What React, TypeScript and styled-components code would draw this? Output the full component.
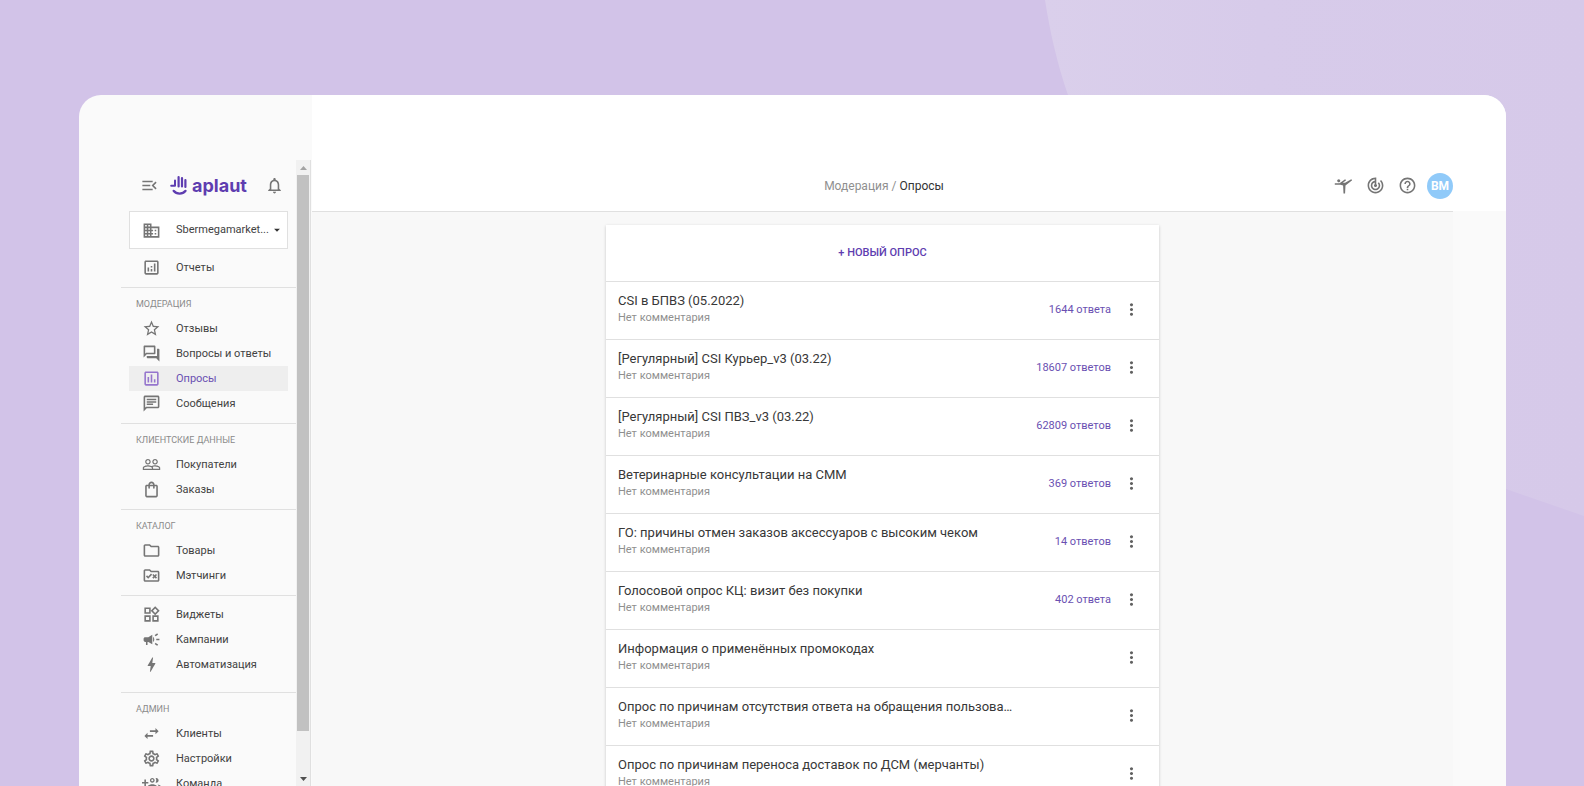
import React from "react";
import styled, { createGlobalStyle, css } from "styled-components";
import {
  MdMenuOpen,
  MdNotificationsNone,
  MdBusiness,
  MdArrowDropDown,
  MdOutlineAnalytics,
  MdStarOutline,
  MdOutlineQuestionAnswer,
  MdOutlinePoll,
  MdOutlineChat,
  MdPeopleOutline,
  MdOutlineShoppingBag,
  MdOutlineFolder,
  MdOutlineRuleFolder,
  MdOutlineWidgets,
  MdCampaign,
  MdBolt,
  MdSwapHoriz,
  MdOutlineSettings,
  MdSportsGymnastics,
  MdTrackChanges,
  MdHelpOutline,
  MdMoreVert,
} from "react-icons/md";

const color = {
  accent: "#5e3db0",
  accentSoft: "#9575cd",
  link: "#6a50b2",
  text: "#424242",
  muted: "#8f8f8f",
  icon: "#757575",
  line: "#e0e0e0",
  panel: "#fafafa",
};

const GlobalStyle = createGlobalStyle`
  *, *::before, *::after { box-sizing: border-box; }
  body { margin: 0; font-family: Roboto, "Liberation Sans", sans-serif; color: ${color.text}; }
  a { color: inherit; text-decoration: none; }
  ul { list-style: none; margin: 0; padding: 0; }
  button { font: inherit; color: inherit; background: none; border: 0; padding: 0; cursor: pointer; }
`;

const Page = styled.div`
  position: relative;
  height: 100vh;
  overflow: hidden;
  padding: 95px 78px 0 79px;
  background: #d2c3e8;
`;

const Backdrop = styled.svg`
  position: absolute;
  top: 0;
  right: 0;
`;

const Window = styled.div`
  position: relative;
  display: flex;
  height: 100%;
  overflow: hidden;
  border-radius: 22px 22px 0 0;
  background: ${color.panel};
`;

const Sidebar = styled.aside`
  display: flex;
  flex: none;
  width: 233px;
  padding: 65px 1px 0 42px;
`;

const SidebarContent = styled.div`
  flex: 1;
  min-width: 0;
  overflow: hidden;
`;

const Brand = styled.div`
  display: flex;
  align-items: center;
  height: 51px;
  padding: 0 12px 0 19px;
  color: ${color.icon};
`;

const IconButton = styled.button`
  display: flex;
  align-items: center;
  justify-content: center;
  flex: none;
`;

const Logo = styled.a`
  display: flex;
  align-items: center;
  gap: 4px;
  flex: 1;
  margin-left: 11px;
  color: ${color.accent};
  font: 700 18px/20px Inter, sans-serif;
`;

const AccountPicker = styled.label`
  position: relative;
  display: flex;
  align-items: center;
  height: 38px;
  margin: 0 8px;
  padding-left: 12px;
  border: 1px solid ${color.line};
  background: #fff;
  color: ${color.icon};
`;

const AccountSelect = styled.select`
  flex: 1;
  min-width: 0;
  margin-left: 15px;
  padding: 0;
  border: 0;
  appearance: none;
  background: none;
  color: ${color.text};
  font: 11px/20px Roboto, sans-serif;
`;

const PickerArrow = styled(MdArrowDropDown)`
  position: absolute;
  right: 3px;
  color: #333;
  pointer-events: none;
`;

const Section = styled.section<{ $first?: boolean; $untitled?: boolean }>`
  padding-bottom: 7px;
  border-top: 1px solid ${color.line};
  ${(p) => p.$first && css`
    padding-top: 6px;
    border-top: 0;
  `}
  ${(p) => p.$untitled && css`
    padding: 6px 0 15px;
  `}
`;

const SectionTitle = styled.h2`
  margin: 0;
  padding: 8px 15px 4px;
  color: #8a8a8a;
  font-size: 9px;
  font-weight: 400;
  line-height: 16px;
  text-transform: uppercase;
`;

const NavLink = styled.a<{ $active?: boolean }>`
  display: flex;
  align-items: center;
  gap: 15px;
  height: 25px;
  margin: 0 8px;
  padding-left: 13px;
  font-size: 11px;
  line-height: 20px;
  white-space: nowrap;
  background: ${(p) => (p.$active ? "#eeeeee" : "transparent")};
  color: ${(p) => (p.$active ? color.link : color.text)};
  svg {
    flex: none;
    color: ${(p) => (p.$active ? color.accentSoft : color.icon)};
  }
`;

const ScrollBar = styled.div`
  display: flex;
  flex-direction: column;
  flex: none;
  width: 15px;
  padding: 0 1px;
  border-right: 1px solid ${color.line};
  background: #f1f1f1;
`;

const ScrollArrow = styled.span`
  display: flex;
  align-items: center;
  justify-content: center;
  height: 15px;
`;

const ScrollTrack = styled.div`
  display: grid;
  flex: 1;
  grid-template-rows: 14fr 1fr;
`;

const ScrollThumb = styled.div`
  background: #c1c1c1;
`;

const Main = styled.main`
  display: flex;
  flex-direction: column;
  flex: 1;
  min-width: 0;
`;

const TopBar = styled.header`
  flex: none;
  padding: 65px 53px 0 0;
  background: #fff;
`;

const TopBarRow = styled.div`
  display: grid;
  grid-template-columns: 1fr auto 1fr;
  align-items: center;
  height: 51px;
`;

const Breadcrumb = styled.nav`
  grid-column: 2;
  display: flex;
  gap: 3px;
  margin-left: 3px;
  font-size: 12px;
  line-height: 20px;
  color: ${color.muted};
`;

const Current = styled.span`
  color: #333;
`;

const Tools = styled.div`
  display: flex;
  align-items: center;
  justify-content: flex-end;
  gap: 13px;
  color: ${color.icon};
`;

const Avatar = styled.button`
  width: 26px;
  height: 26px;
  margin-left: -3px;
  border-radius: 50%;
  background: #90caf9;
  color: #fff;
  font-size: 12px;
  font-weight: 700;
`;

const Content = styled.div`
  flex: 1;
  min-height: 0;
  margin-right: 53px;
  padding-top: 13px;
  border-top: 1px solid ${color.line};
  background: #f8f8f8;
`;

const Card = styled.section`
  max-width: 553px;
  margin: 0 auto;
  background: #fff;
  box-shadow: 0 1px 3px rgba(0, 0, 0, 0.2);
`;

const NewSurvey = styled.button`
  display: block;
  width: 100%;
  height: 56px;
  padding-bottom: 2px;
  color: ${color.accent};
  font-size: 11px;
  font-weight: 500;
  text-transform: uppercase;
`;

const SurveyRow = styled.li`
  display: flex;
  align-items: center;
  height: 58px;
  padding: 0 18px 2px 12px;
  border-top: 1px solid ${color.line};
`;

const SurveyText = styled.div`
  flex: 1;
  min-width: 0;
  padding-bottom: 2px;
`;

const SurveyTitle = styled.h3`
  margin: 0;
  font-size: 13px;
  font-weight: 400;
  line-height: 18px;
  color: #383838;
`;

const SurveyNote = styled.p`
  margin: 0;
  font-size: 11px;
  line-height: 16px;
  color: ${color.muted};
`;

const Answers = styled.a`
  margin-right: 10px;
  font-size: 11px;
  line-height: 20px;
  color: ${color.link};
`;

const MoreButton = styled(IconButton)`
  width: 20px;
  color: #616161;
`;

type IconType = React.ComponentType<{ size?: number }>;
type Item = { label: string; icon: IconType; active?: boolean };
type Group = { title?: string; first?: boolean; items: Item[] };

const TeamIcon: IconType = ({ size = 24 }) => (
  <svg width={size} height={size} viewBox="0 0 24 24" fill="currentColor" fillRule="evenodd" aria-hidden="true">
    <path d="M8 10H5V7H3v3H0v2h3v3h2v-3h3v-2zm10 1c1.660 0 2.990-1.340 2.990-3S19.660 5 18 5c-.320 0-.630.050-.910.140.570.810.900 1.790.900 2.860s-.340 2.040-.900 2.860c.280.090.590.140.910.140zm-5 0c1.660 0 3-1.340 3-3s-1.340-3-3-3-3 1.340-3 3 1.340 3 3 3zm0-1.700c-.700 0-1.300-.600-1.300-1.300s.600-1.300 1.300-1.300 1.300.600 1.300 1.300-.600 1.300-1.300 1.300zm6.620 3.860c.830.730 1.380 1.660 1.380 2.840v2h3v-2c0-1.540-2.370-2.490-4.380-2.840zM13 13c-2 0-6 1-6 3v2h12v-2c0-2-4-3-6-3z" />
  </svg>
);

const groups: Group[] = [
  { first: true, items: [{ label: "Отчеты", icon: MdOutlineAnalytics }] },
  {
    title: "Модерация",
    items: [
      { label: "Отзывы", icon: MdStarOutline },
      { label: "Вопросы и ответы", icon: MdOutlineQuestionAnswer },
      { label: "Опросы", icon: MdOutlinePoll, active: true },
      { label: "Сообщения", icon: MdOutlineChat },
    ],
  },
  {
    title: "Клиентские данные",
    items: [
      { label: "Покупатели", icon: MdPeopleOutline },
      { label: "Заказы", icon: MdOutlineShoppingBag },
    ],
  },
  {
    title: "Каталог",
    items: [
      { label: "Товары", icon: MdOutlineFolder },
      { label: "Мэтчинги", icon: MdOutlineRuleFolder },
    ],
  },
  {
    items: [
      { label: "Виджеты", icon: MdOutlineWidgets },
      { label: "Кампании", icon: MdCampaign },
      { label: "Автоматизация", icon: MdBolt },
    ],
  },
  {
    title: "Админ",
    items: [
      { label: "Клиенты", icon: MdSwapHoriz },
      { label: "Настройки", icon: MdOutlineSettings },
      { label: "Команда", icon: TeamIcon },
    ],
  },
];

const surveys: { title: string; answers?: string }[] = [
  { title: "CSI в БПВЗ (05.2022)", answers: "1644 ответа" },
  { title: "[Регулярный] CSI Курьер_v3 (03.22)", answers: "18607 ответов" },
  { title: "[Регулярный] CSI ПВЗ_v3 (03.22)", answers: "62809 ответов" },
  { title: "Ветеринарные консультации на СММ", answers: "369 ответов" },
  { title: "ГО: причины отмен заказов аксессуаров с высоким чеком", answers: "14 ответов" },
  { title: "Голосовой опрос КЦ: визит без покупки", answers: "402 ответа" },
  { title: "Информация о применённых промокодах" },
  { title: "Опрос по причинам отсутствия ответа на обращения пользова…" },
  { title: "Опрос по причинам переноса доставок по ДСМ (мерчанты)" },
];

const HandMark = () => (
  <svg width="18" height="21" viewBox="0 0 18 21" fill="none" stroke="currentColor" strokeWidth="2" strokeLinecap="round" aria-hidden="true">
    <path d="M1.200 10.800H5V5.500" strokeLinejoin="round" />
    <path d="M8.600 11.500V2M12 11.500V3M15.400 12V5" strokeWidth="2.200" />
    <path d="M3.600 15.800c3 3.800 9 3.800 12 0" strokeWidth="2.200" />
  </svg>
);

export default function App() {
  return (
    <>
      <GlobalStyle />
      <Page>
        <Backdrop width="540" height="520" viewBox="0 0 540 520" aria-hidden="true">
          <defs>
            <linearGradient id="glow" x1="0" y1="0" x2="1" y2="0">
              <stop offset="0" stopColor="#dacfeb" />
              <stop offset="0.4" stopColor="#d7cbea" />
              <stop offset="1" stopColor="#d6c9e9" />
            </linearGradient>
          </defs>
          <path d="M1 0C6 32 13 63 24 95C96 300 266 425 462 489L540 516V0Z" fill="url(#glow)" />
        </Backdrop>
        <Window>
          <Sidebar>
            <SidebarContent>
              <Brand>
                <IconButton aria-label="Свернуть меню"><MdMenuOpen size={19} /></IconButton>
                <Logo href="#home"><HandMark />aplaut</Logo>
                <IconButton aria-label="Уведомления"><MdNotificationsNone size={19} /></IconButton>
              </Brand>
              <AccountPicker>
                <MdBusiness size={19} />
                <AccountSelect aria-label="Аккаунт">
                  <option>Sbermegamarket...</option>
                </AccountSelect>
                <PickerArrow size={14} />
              </AccountPicker>
              {groups.map((group, i) => (
                <Section key={i} $first={group.first} $untitled={!group.title && !group.first}>
                  {group.title && <SectionTitle>{group.title}</SectionTitle>}
                  <ul>
                    {group.items.map(({ label, icon: Icon, active }) => (
                      <li key={label}>
                        <NavLink href="#nav" $active={active}><Icon size={19} />{label}</NavLink>
                      </li>
                    ))}
                  </ul>
                </Section>
              ))}
            </SidebarContent>
            <ScrollBar aria-hidden="true">
              <ScrollArrow><svg width="7" height="4"><path d="M0 4L3.500 0L7 4Z" fill="#a3a3a3" /></svg></ScrollArrow>
              <ScrollTrack><ScrollThumb /></ScrollTrack>
              <ScrollArrow><svg width="7" height="4"><path d="M0 0L3.500 4L7 0Z" fill="#505050" /></svg></ScrollArrow>
            </ScrollBar>
          </Sidebar>
          <Main>
            <TopBar>
              <TopBarRow>
                <Breadcrumb>
                  <a href="#moderation">Модерация</a>
                  <span>/</span>
                  <Current>Опросы</Current>
                </Breadcrumb>
                <Tools>
                  <IconButton aria-label="Обучение"><MdSportsGymnastics size={19} /></IconButton>
                  <IconButton aria-label="Активность"><MdTrackChanges size={19} /></IconButton>
                  <IconButton aria-label="Помощь"><MdHelpOutline size={19} /></IconButton>
                  <Avatar>BM</Avatar>
                </Tools>
              </TopBarRow>
            </TopBar>
            <Content>
              <Card>
                <NewSurvey>+ Новый опрос</NewSurvey>
                <ul>
                  {surveys.map((s) => (
                    <SurveyRow key={s.title}>
                      <SurveyText>
                        <SurveyTitle>{s.title}</SurveyTitle>
                        <SurveyNote>Нет комментария</SurveyNote>
                      </SurveyText>
                      {s.answers && <Answers href="#answers">{s.answers}</Answers>}
                      <MoreButton aria-label="Действия"><MdMoreVert size={19} /></MoreButton>
                    </SurveyRow>
                  ))}
                </ul>
              </Card>
            </Content>
          </Main>
        </Window>
      </Page>
    </>
  );
}
